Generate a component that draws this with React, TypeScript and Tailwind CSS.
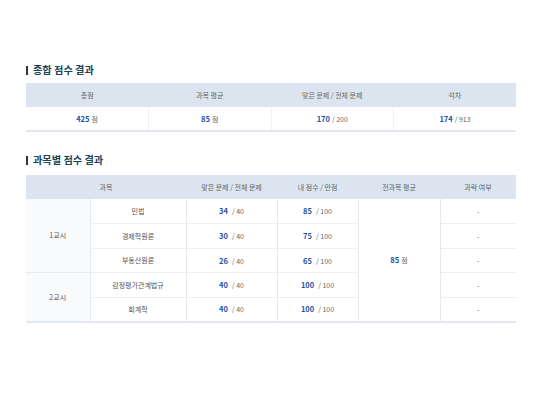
import React from 'react';

const font = { fontFamily: '"Noto Sans CJK KR", "Noto Sans", sans-serif' };

const Title: React.FC<{ text: string }> = ({ text }) => (
  <div className="flex items-center gap-[5px] h-[14px]">
    <span className="w-[2px] h-[9px] bg-[#333]" />
    <h2 className="text-[10.2px] font-bold text-[#1a4656] leading-none">{text}</h2>
  </div>
);

const Num: React.FC<{ v: string; rest: string; gap?: boolean }> = ({ v, rest, gap }) => (
  <span>
    <span className="font-bold text-[#2452a8] text-[7.5px]">{v}</span>
    <span className={`text-[#666] ${gap ? 'ml-[4px]' : 'ml-[2px]'}`}>{rest}</span>
  </span>
);

const subjects = [
  { name: '민법', c: '34', s: '85' },
  { name: '경제학원론', c: '30', s: '75' },
  { name: '부동산원론', c: '26', s: '65' },
  { name: '감정평가관계법규', c: '40', s: '100' },
  { name: '회계학', c: '40', s: '100' },
];

export default function App() {
  const th = 'bg-[#dce5ef] font-normal text-[#666] h-[24px] text-center';
  const td = 'h-[24.5px] text-center border-b border-[#edf0f4]';
  return (
    <div className="w-[539px] h-[395px] bg-white text-[7px] text-[#555]" style={font}>
      <div className="pl-[26px] pr-[23px] pt-[63px]">
        <Title text="종합 점수 결과" />
        <table className="w-full mt-[6px] border-collapse table-fixed border-b-2 border-[#e3e8ee]">
          <thead>
            <tr>
              <th className={th}>총점</th>
              <th className={th}>과목 평균</th>
              <th className={th}>맞은 문제 / 전체 문제</th>
              <th className={th}>석차</th>
            </tr>
          </thead>
          <tbody>
            <tr>
              <td className="h-[24px] text-center border-r border-[#edf0f4]"><Num v="425" rest="점" /></td>
              <td className="h-[24px] text-center border-r border-[#edf0f4]"><Num v="85" rest="점" /></td>
              <td className="h-[24px] text-center border-r border-[#edf0f4]"><Num v="170" rest="/ 200" /></td>
              <td className="h-[24px] text-center"><Num v="174" rest="/ 913" /></td>
            </tr>
          </tbody>
        </table>

        <div className="mt-[21px]">
          <Title text="과목별 점수 결과" />
        </div>
        <table className="w-full mt-[8px] border-collapse table-fixed border-b-2 border-[#e3e8ee]">
          <colgroup>
            <col className="w-[64px]" />
            <col className="w-[96px]" />
            <col className="w-[91px]" />
            <col className="w-[81px]" />
            <col className="w-[82px]" />
            <col />
          </colgroup>
          <thead>
            <tr>
              <th className={th} colSpan={2}>과목</th>
              <th className={th}>맞은 문제 / 전체 문제</th>
              <th className={th}>내 점수 / 만점</th>
              <th className={th}>전과목 평균</th>
              <th className={th}>과락 여부</th>
            </tr>
          </thead>
          <tbody>
            {subjects.map((s, i) => (
              <tr key={s.name}>
                {i === 0 && (
                  <td rowSpan={3} className="text-center bg-[#f8fafc] border-r border-b border-[#e6eaef]">1교시</td>
                )}
                {i === 3 && (
                  <td rowSpan={2} className="text-center bg-[#f8fafc] border-r border-[#e6eaef]">2교시</td>
                )}
                <td className={`${td} border-r border-r-[#e6eaef]`}>{s.name}</td>
                <td className={`${td} border-r border-r-[#e6eaef]`}><Num v={s.c} rest="/ 40" gap /></td>
                <td className={`${td} border-r border-r-[#e6eaef]`}><Num v={s.s} rest="/ 100" gap /></td>
                {i === 0 && (
                  <td rowSpan={5} className="text-center border-r border-[#e6eaef]"><Num v="85" rest="점" /></td>
                )}
                <td className={`${td} ${i === 4 ? 'border-b-0' : ''}`}>-</td>
              </tr>
            ))}
          </tbody>
        </table>
      </div>
    </div>
  );
}
